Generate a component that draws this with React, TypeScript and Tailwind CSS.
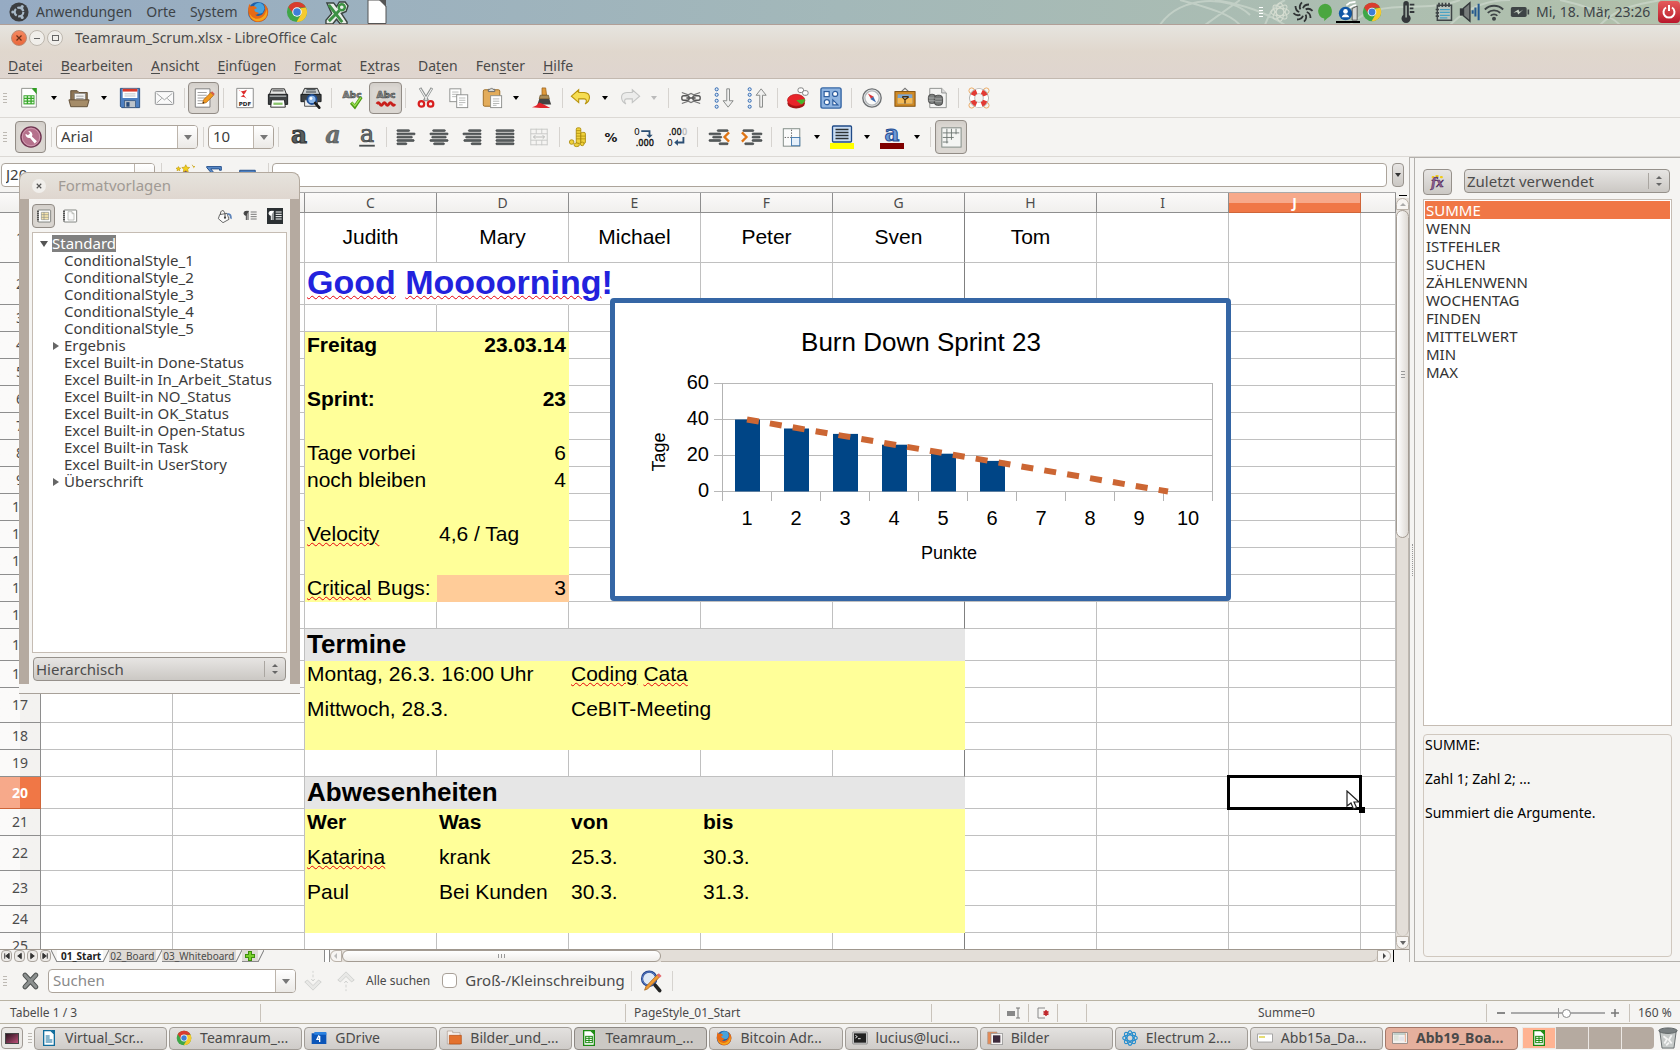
import React from "react";

type Cell = { t?: React.ReactNode; f?: "y" | "g" | "p" | "n"; c?: string };

const W = ({ children }: { children: React.ReactNode }) => (
  <span className="underline decoration-red-600 decoration-wavy decoration-1 underline-offset-1">{children}</span>
);

/* ---------- icons ---------- */
const Svg = ({ children, s = "size-6" }: { children: React.ReactNode; s?: string }) => (
  <svg viewBox="0 0 24 24" className={`${s} shrink-0 overflow-visible`} fill="none" aria-hidden="true">{children}</svg>
);

const bars = (x: number[], w: number[]) =>
  x.map((v, i) => <rect key={i} x={v} y={4 + i * 3.6} width={w[i]} height="2" rx="1" fill="#5b6061" stroke="#303436" strokeWidth=".6" />);

const icons: Record<string, React.ReactNode> = {
  newdoc: (<><path d="M4 1.500h11l5 5V22H4z" fill="#fff" stroke="#8a8c88" /><path d="M15 1h5.500v7z" fill="#2e9e22" /><rect x="6" y="9" width="12" height="10" fill="#39a82c" /><path d="M7 11h2.500M11 11h2.500M15 11h2M7 14h2.500M11 14h2.500M15 14h2M7 17h2.500M11 17h2.500M15 17h2" stroke="#e9f7e4" strokeWidth="1.700" /></>),
  open: (<><path d="M3 4h7l2 2h9v13H3z" fill="#8c7455" stroke="#5d4a33" /><path d="M7 7h12v10H7z" fill="#f4f4f2" stroke="#777" strokeWidth=".7" /><path d="M9 10h8M9 12.500h8" stroke="#999" /><path d="M1 14h22l-2 7.500H3z" fill="#a58c68" stroke="#5d4a33" /></>),
  save: (<><path d="M1.500 1.500h21v21H3l-1.500-1.500z" fill="#4d7fc1" stroke="#274b7c" /><rect x="4" y="2" width="16" height="10" fill="#fff" /><rect x="4" y="2" width="16" height="3" fill="#d8392b" /><path d="M6 7.500h12M6 9.800h12" stroke="#b4bcc4" /><rect x="6" y="15" width="12" height="7.500" fill="#bcc3ca" stroke="#2c4a70" strokeWidth=".7" /><rect x="8" y="16.500" width="3.500" height="5" fill="#274b7c" /></>),
  mail: (<><rect x="2.500" y="5" width="20" height="14" rx="1" fill="#fafafa" stroke="#85888a" /><path d="m4 7 8.500 7L21 7M4 17.500l5.500-5M21 17.500l-5.500-5" stroke="#9a9c9c" /></>),
  edit: (<><path d="M2.500 2h16v20h-16z" fill="#fff" stroke="#777" /><path d="M5 6h10M5 9h10M5 12h10M5 15h6M5 18h5" stroke="#999" /><path d="m10.500 18 1-4 8-8 3 3-8 8z" fill="#f29a1f" stroke="#a45d0b" strokeWidth=".8" /><path d="m19.500 6 1.300-1.300 3 3L22.500 9z" fill="#d4574a" /><path d="m10.500 18 .5-2 1.500 1.500z" fill="#222" /></>),
  pdf: (<><path d="M3 1.500h18v21H3z" fill="#fff" stroke="#858785" /><path d="M5 3c3 1 5 5 9 10-2-2-5-3-8-2 3-1 7-4 8-8-3 1-6 3-9 0z" fill="#dd2c2c" /><text x="12" y="21" textAnchor="middle" fontFamily="DejaVu Sans" fontWeight="700" fontSize="6" fill="#222">PDF</text></>),
  print: (<><path d="M5 2h14l3 8H2z" fill="#e6e7e5" stroke="#222" /><path d="M6 4h12" stroke="#777" strokeWidth="2" /><path d="M1.500 8h21v11h-21z" fill="#3d4143" stroke="#16181a" /><path d="M3 10h18" stroke="#a9adae" strokeWidth="1.500" /><path d="M5 14h14l1 8H4z" fill="#fff" stroke="#222" /><path d="M7 17h10v2.500H7z" fill="#88c36a" /></>),
  preview: (<><path d="M5 1.500h14l3 7H2z" fill="#cfd3d5" stroke="#222" /><path d="M7 3h10M6.500 5.500h11" stroke="#2c343a" strokeWidth="1.200" /><path d="M1 8h22v8H1z" fill="#3d4143" stroke="#16181a" /><path d="M5 14h14v7H5z" fill="#eee" stroke="#444" /><circle cx="13" cy="13.500" r="5" fill="#8db8ea" stroke="#1f4f96" strokeWidth="2" /><circle cx="12" cy="12.500" r="1.600" fill="#fff" /><path d="m16.500 17.500 4.500 5" stroke="#1e1e1e" strokeWidth="3" strokeLinecap="round" /></>),
  spell: (<><text x="11" y="12" textAnchor="middle" fontFamily="DejaVu Sans" fontWeight="700" fontSize="10" fill="#8a8d8c" stroke="#3c4040" strokeWidth=".6">Abc</text><path d="m10 17 4 4.500L21 11" stroke="#4b9a12" strokeWidth="3.600" /><path d="m10.600 17 3.400 3.600L20.500 11.500" stroke="#9be052" strokeWidth="1.500" /></>),
  autospell: (<><text x="12" y="12.500" textAnchor="middle" fontFamily="DejaVu Sans" fontWeight="700" fontSize="10" fill="#8a8d8c" stroke="#3c4040" strokeWidth=".6">Abc</text><path d="M2 18.500c1.200-2 2.100-2 3.300 0s2.100 2 3.300 0 2.100-2 3.300 0 2.100 2 3.300 0 2.100-2 3.300 0 2.100 2 3.300 0" stroke="#c8201c" strokeWidth="3" /></>),
  cut: (<><path d="M5.500 1 14 15M18.500 1 10 15" stroke="#8c908f" strokeWidth="3" /><path d="M5.800 2 13 14M18.200 2 11 14" stroke="#f2f2f2" strokeWidth="1.200" /><circle cx="7" cy="18.500" r="3" stroke="#d81e1e" strokeWidth="2.400" /><circle cx="17" cy="18.500" r="3" stroke="#d81e1e" strokeWidth="2.400" /></>),
  copy: (<><rect x="2" y="2" width="12" height="14" fill="#fff" stroke="#8b8d8b" /><path d="M4.500 5.500h7M4.500 8h7M4.500 10.500h7" stroke="#b5b7b5" /><rect x="9.500" y="8.500" width="12" height="14" fill="#fff" stroke="#8b8d8b" /><path d="M12 12h7M12 14.500h7M12 17h7M12 19.500h4" stroke="#b5b7b5" /></>),
  paste: (<><rect x="2.500" y="3" width="18" height="18" rx="1.500" fill="#e3ac5b" stroke="#98671f" /><path d="M8 5V2.500h2L11.500 1 13 2.500h2V5z" fill="#d6d8d6" stroke="#666" /><rect x="10.500" y="9.500" width="12" height="13" fill="#fff" stroke="#8b8d8b" /><path d="M13 13h7M13 15.500h7M13 18h7M13 20h4" stroke="#b0b2b0" /></>),
  brush: (<><path d="M12 1h4l1 8h-5z" fill="#e09a3c" stroke="#99601a" strokeWidth=".8" /><path d="M10 9h9l1 4H9z" fill="#ad8c56" stroke="#6b5227" strokeWidth=".8" /><path d="M9 13h11l2 6H7z" fill="#444" /><path d="M1 22c5-1 6-3 8-5l5 2 7 4H10z" fill="#e2242b" /></>),
  undo: (<path d="M9.500 3 1.500 10l8 7v-4h6c3 0 3 3 1 5.500 6-3 7-12-1-12.500h-6z" fill="#f6dd52" stroke="#b8930c" strokeWidth="1.200" />),
  redo: (<path d="m14.500 3 8 7-8 7v-4h-6c-3 0-3 3-1 5.500-6-3-7-12 1-12.500h6z" fill="#ececeb" stroke="#c3c4c3" strokeWidth="1.200" />),
  link: (<><rect x="2" y="9.500" width="8" height="5" rx="2" stroke="#555" strokeWidth="1.500" /><rect x="14" y="9.500" width="8" height="5" rx="2" stroke="#555" strokeWidth="1.500" /><path d="M7 12h10" stroke="#555" strokeWidth="1.800" /><path d="m2 6 7 2.500L12 7l3 1.500L22 6M2 18l7-2.500 3 1.500 3-1.500 7 2.500" stroke="#777" strokeWidth="1.400" /></>),
  sortd: (<>{[2.500, 8.500, 15, 21.500].map((y) => <circle key={y} cx="4" cy={y} r="1.700" fill="#dce9f8" stroke="#2a62ad" />)}<path d="M15 2h3v13h4l-5.500 7L11 15h4z" fill="#f0f0ef" stroke="#828482" /></>),
  sortu: (<>{[2.500, 8.500, 15, 21.500].map((y) => <circle key={y} cx="4" cy={y} r="1.700" fill="#dce9f8" stroke="#2a62ad" />)}<path d="M15 22h3V9h4l-5.500-7L11 9h4z" fill="#f0f0ef" stroke="#828482" /></>),
  chart: (<><ellipse cx="10" cy="18" rx="9.500" ry="5.500" fill="#a31515" /><ellipse cx="10" cy="14.500" rx="9.500" ry="6.500" fill="#e8242a" stroke="#b01414" strokeWidth=".7" /><path d="M10 14.500 19.500 13c.5 3-2 5-4 6z" fill="#46b52b" /><rect x="12" y="1" width="6" height="5" rx="2" fill="#fff" stroke="#777" /><rect x="17" y="4" width="6" height="5" rx="2" fill="#fff" stroke="#777" /></>),
  shapes: (<><rect x="1" y="1" width="22" height="22" rx="2" fill="#8fb4e0" stroke="#3565a4" strokeWidth="1.500" /><g stroke="#2d5d9e" strokeWidth="1.300" fill="#fff"><rect x="4.500" y="5" width="5.500" height="5.500" /><circle cx="16.500" cy="7.500" r="2.800" /><circle cx="7.500" cy="16.500" r="2.800" /><path d="M14 14v5.500h5.500z" /></g></>),
  compass: (<><circle cx="12" cy="12" r="10" fill="#e9ebee" stroke="#6e7173" strokeWidth="1.500" /><circle cx="12" cy="12" r="7.800" stroke="#b5b8ba" strokeWidth="1.400" fill="#fafafa" /><path d="m7.500 7 6.500 3.500L11 13z" fill="#d9363a" /><path d="m16.500 17-6.300-3.800L13.500 10.500z" fill="#3d69ad" /></>),
  gallery: (<><path d="m8 5 4-3.500L16 5" stroke="#777" strokeWidth="1.300" /><rect x="1" y="5" width="22" height="16" fill="#d08a25" stroke="#7b4a08" /><rect x="4" y="8" width="16" height="10" fill="#7da5cf" /><path d="M4 12h16v6H4z" fill="#f4ba55" /><path d="M12 18v-5M12 14l-3-3M12 14l4-3M9 10.500h7" stroke="#402a10" strokeWidth="1.300" /></>),
  source: (<><path d="M3 1.500h13l5 5v16H3z" fill="#f4f4f3" stroke="#8b8d8b" /><path d="M16 1.500v5h5" fill="#ddd" stroke="#8b8d8b" /><rect x="1.500" y="8" width="8" height="10" rx="3.500" fill="#7c7f7e" stroke="#444" /><rect x="8" y="9" width="9" height="11" rx="3.500" fill="#747776" stroke="#444" /><path d="M2 12h7M2 15h7M9 13h7M9 16h7" stroke="#b5b7b5" strokeWidth=".8" /></>),
  help: (<><circle cx="4" cy="4" r="3" stroke="#eba55a" /><circle cx="20" cy="4" r="3" stroke="#eba55a" /><circle cx="4" cy="20" r="3" stroke="#eba55a" /><circle cx="20" cy="20" r="3" stroke="#eba55a" /><circle cx="12" cy="12" r="7.500" stroke="#9a9c9b" strokeWidth="6.500" /><circle cx="12" cy="12" r="7.500" stroke="#fff" strokeWidth="5" /><circle cx="12" cy="12" r="7.500" stroke="#e23a34" strokeWidth="5" strokeDasharray="5.890 5.890" strokeDashoffset="-2.950" /></>),
  wrench: (<><circle cx="12" cy="12" r="11" fill="#b5718c" stroke="#6e3450" strokeWidth="1.500" /><circle cx="12" cy="12" r="9.500" stroke="#d39db2" /><path d="M6 8.500a4 4 0 0 0 5 4.500l5 6 2.500-2.300-5.500-5.200A4 4 0 0 0 9 5.500l2 2.500-2.300 2z" fill="#fff" /></>),
  bold: (<text x="12" y="19" textAnchor="middle" fontFamily="DejaVu Serif" fontWeight="700" fontSize="27" fill="#5a5f60" stroke="#34383a" strokeWidth="1.200">a</text>),
  italic: (<text x="12" y="19" textAnchor="middle" fontFamily="DejaVu Serif" fontStyle="italic" fontWeight="700" fontSize="26" fill="#6d7272" stroke="#3f4445" strokeWidth=".5">a</text>),
  underline: (<><text x="12" y="17" textAnchor="middle" fontFamily="DejaVu Serif" fontSize="26" fill="#6d7272" stroke="#3f4445" strokeWidth=".8">a</text><path d="M3.500 21.500h17" stroke="#4a4f50" strokeWidth="2" /></>),
  left: <>{bars([2, 2, 2, 2, 2], [14, 20, 17, 19, 11])}</>,
  center: <>{bars([5, 2, 4, 2, 6], [14, 20, 16, 20, 12])}</>,
  right: <>{bars([8, 2, 5, 3, 11], [14, 20, 17, 19, 11])}</>,
  justify: <>{bars([2, 2, 2, 2, 2], [20, 20, 20, 20, 20])}</>,
  merge: (<><path d="M3 3.500h18M3 8.500h18M3 15.500h18M3 20.500h18M3 3v18M21 3v18M9 3v5.500M15 3v5.500M9 15.500V21M15 15.500V21" stroke="#c6c7c5" /><path d="M6 12h12M8 10l-2 2 2 2M16 10l2 2-2 2" stroke="#b5b6b4" /></>),
  currency: (<><g fill="#efd13c" stroke="#a88708" strokeWidth=".9"><rect x="9" y="2" width="5" height="17" rx="1.500" /><rect x="14" y="7" width="5" height="12" rx="1.500" /><circle cx="4" cy="17.500" r="2.500" /><ellipse cx="9.500" cy="20.500" rx="3" ry="2" /><circle cx="15.500" cy="19.500" r="2" /></g><path d="M9 5h5M9 8h5M9 11h10M9 14h10" stroke="#a88708" strokeWidth=".8" /></>),
  percent: (<text x="12" y="17" textAnchor="middle" fontFamily="DejaVu Sans" fontWeight="700" fontSize="14" fill="#151515">%</text>),
  adddec: (<><text x="1" y="10" fontFamily="DejaVu Sans" fontSize="10" fill="#111">0</text><text x="3" y="22" fontFamily="DejaVu Sans" fontSize="9" fill="#111" stroke="#111" strokeWidth=".4">.000</text><path d="M9 5.500h9v5" stroke="#2c4f74" strokeWidth="2" /><path d="M14.500 9.500h7L18 13z" fill="#2c4f74" /></>),
  deldec: (<><text x="3" y="9.500" fontFamily="DejaVu Sans" fontSize="9" fill="#111" stroke="#111" strokeWidth=".3">.00<tspan fill="#bbb" stroke="#bbb">0</tspan></text><text x="1" y="22" fontFamily="DejaVu Sans" fontSize="10" fill="#111">0</text><path d="M19 12v6h-7" stroke="#2c4f74" strokeWidth="2" /><path d="M13 14.500v7L9 18z" fill="#2c4f74" /></>),
  inddec: (<>{bars([10, 1, 5, 1, 12], [12, 13, 10, 13, 10])}<path d="m23 7-5 5 5 5" stroke="#df7414" strokeWidth="2.500" /></>),
  indinc: (<>{bars([2, 12, 12, 12, 4], [12, 11, 9, 11, 10])}<path d="m1 7 5 5-5 5" stroke="#df7414" strokeWidth="2.500" /></>),
  border: (<><rect x="2.500" y="3" width="18" height="19" fill="#fbfbfb" stroke="#7b8580" /><path d="M11.500 4v8M4 12.500h8" stroke="#555" strokeDasharray="1.500 1.500" /><rect x="11.500" y="12.500" width="9" height="9" fill="#e6f0fb" stroke="#4277ad" /></>),
  bg: (<><rect x="2.500" y="1" width="19" height="16" rx="1" fill="#c9dcf3" stroke="#204a87" strokeWidth="1.300" /><path d="M5.500 4.500h13M5.500 7.500h13M5.500 10.500h13M5.500 13.500h13" stroke="#2d3235" strokeWidth="1.700" /><path d="M0 18h24v6H0z" fill="#ffff00" /></>),
  color: (<><text x="12" y="16" textAnchor="middle" fontFamily="DejaVu Serif" fontWeight="700" fontSize="23" fill="#6d9ad6" stroke="#1f4c92">a</text><path d="M0 18h24v6H0z" fill="#800000" /></>),
  grid: (<><rect x="2" y="2" width="21" height="21" fill="#f4f5f3" stroke="#7b8580" /><path d="M3 7.500h18M3 12.500h12M3 17.500h6M7.500 3v16M12.500 3v12M17.500 3v6" stroke="#6d7672" /></>),
  wizard: (<><path d="M4 22 16 10" stroke="#6b3b7c" strokeWidth="4" /><path d="m15 3 1.300 2.700 3 .3-2.200 2 .6 3-2.700-1.500L12.300 11l.6-3-2.200-2 3-.3zM22 3l.9 1.800 2 .2-1.500 1.300M7 5l.8 1.600 1.700.2-1.300 1.100L8.500 9.500 7 8.700l-1.500.8.300-1.600L4.500 6.800l1.700-.2z" fill="#f3cf1d" stroke="#c09a08" strokeWidth=".7" /></>),
  sum: (<path d="M4 5h16v4h-2V7.500H8.500L13 13l-5 6H20v2H4l6-8-6-7z" fill="#5b8cc9" stroke="#204a87" />),
  eq: (<path d="M4 9h17v4H4zM4 16h17v3.500H4z" fill="#4b7fc0" stroke="#204a87" />),
  fx: (<><path d="M5 5.500h1M10 4h1.500M16 5.500h1" stroke="#efcb18" strokeWidth="3" strokeLinecap="round" /><text x="11" y="19" textAnchor="middle" fontFamily="DejaVu Serif" fontStyle="italic" fontWeight="700" fontSize="16" fill="#91608f" stroke="#4d2a5c" strokeWidth=".7">fx</text></>),
  styCell: (<><rect x="3" y="3" width="19" height="18" rx="1" fill="#fff" stroke="#7a7d79" strokeWidth="1.400" /><path d="M3 4v16" stroke="#333" strokeWidth="3" strokeDasharray="1.500 1.500" /><path d="M8 6.500h11v11H8z" fill="#f7e5ab" stroke="#8d8f8b" /><path d="M8 10h11M8 14h11M12 6v12" stroke="#8d8f8b" /></>),
  styPage: (<><rect x="3" y="3" width="19" height="18" rx="1" fill="#fff" stroke="#7a7d79" strokeWidth="1.400" /><path d="M3 4v16" stroke="#333" strokeWidth="3" strokeDasharray="1.500 1.500" /><path d="M9 5.500h6l3 3v9.500H9zM15 5.500v3h3" stroke="#a7aaa5" fill="#fafafa" /></>),
  bucket: (<><path d="m4 10 11-2 3 9-9 5-7-6z" fill="#fafafa" stroke="#555" strokeWidth="1.300" /><path d="M5 10c0-8 6-8 7-1v6" stroke="#555" strokeWidth="1.500" /><circle cx="12" cy="14.500" r="1.700" fill="#444" /><path d="M15 8c5-1 8 2 7 9l-3-2c1-4-1-5-3-5z" fill="#5d83b9" /></>),
  para: (<><path d="M9 5v13M6.500 5v13M10 5H6a3 3 0 0 0 0 6h.5" stroke="#444" strokeWidth="1.500" fill="#444" /><path d="M13 6h9M13 9.500h9M13 13h9M13 16.500h9" stroke="#666" strokeWidth="1.300" /></>),
  paraInv: (<><path d="M0 0h24v24H0z" fill="#2b3033" /><path d="M9 5v13M6.500 5v13M10 5H6a3 3 0 0 0 0 6h.5" stroke="#fff" strokeWidth="1.500" fill="#fff" /><path d="M13 6h9M13 9.500h9M13 13h9M13 16.500h9" stroke="#fff" strokeWidth="1.500" /></>),
  closeX: (<><path d="m6 5 13 14M19 5 6 19" stroke="#4e5251" strokeWidth="6" strokeLinecap="round" /><path d="m6 5 13 14M19 5 6 19" stroke="#8c908f" strokeWidth="3.500" strokeLinecap="round" /></>),
  down: (<path d="M12 1v2M12 5v3M12 22l-9-9 3-2 6 6 6-6 3 2zM10 10l2 2 2-2" fill="#e8e8e6" stroke="#cfd0ce" />),
  up: (<path d="M12 23v-2M12 19v-3M12 2l-9 9 3 2 6-6 6 6 3-2zM10 14l2-2 2 2" fill="#e8e8e6" stroke="#cfd0ce" />),
  findrep: (<><circle cx="10" cy="9.500" r="7.800" fill="#dfe9f5" stroke="#23438c" strokeWidth="2.400" /><circle cx="10" cy="9.500" r="7.500" stroke="#6d92d6" strokeWidth=".8" /><path d="m16.500 16.500 5 6" stroke="#222" strokeWidth="4" strokeLinecap="round" /><path d="m5 22 1.500-4L19 5l2.500 2.500L8.500 20.500z" fill="#f09a34" stroke="#9c5c10" strokeWidth=".8" /><path d="m18.500 5.500 2-2 3 3-2 2z" fill="#e5696e" /></>),
  ubuntu: (<><circle cx="12" cy="12" r="11.500" fill="#3c3e40" /><circle cx="12" cy="12" r="5.200" stroke="#a9bac8" strokeWidth="2.600" strokeDasharray="9 1.900" /><circle cx="4.600" cy="12" r="1.900" fill="#a9bac8" /><circle cx="15.800" cy="5.500" r="1.900" fill="#a9bac8" /><circle cx="15.800" cy="18.500" r="1.900" fill="#a9bac8" /></>),
  firefox: (<><circle cx="12" cy="12" r="11" fill="#1f5fa8" /><circle cx="13" cy="8" r="6" fill="#49a3dc" /><path d="M1.500 7C0 16 5 23 12 23s12-6 11-13c-1-4-3-6-5-7 2 4 2 6 1 8-2 5-7 7-10 4 2 0 3-1 4-2-3-1-5-1-5-4l3-1C9 5 6 5 4 6L2.500 3z" fill="#e66a16" /><path d="M3 14c2 5 8 7 13 4 3-2 5-5 5-9 3 7-2 13-9 13-5 0-9-4-9-8z" fill="#f5a71c" /></>),
  chrome: (<><circle cx="12" cy="12" r="11" fill="#3fa648" /><path d="M2.500 6.500A11 11 0 0 1 21.800 7H12L8 14z" fill="#d93c2f" /><path d="M21.800 7A11 11 0 0 1 11.500 23L16.500 14.500 16 8z" fill="#f6ca2d" /><circle cx="12" cy="12" r="5.200" fill="#fff" /><circle cx="12" cy="12" r="4.100" fill="#3f7fd6" /></>),
  keyx: (<><path d="M2 2h7l3 4 3-5h6l3 4-2 6-5 2 6 9v2h-7l-4-5-4 5H1v-4l6-7z" fill="#e9efe9" stroke="#3a4540" strokeWidth="1.500" /><path d="m4 4 14 18M4 21 15 10" stroke="#3d9144" strokeWidth="3" /><circle cx="17.500" cy="6.500" r="3.200" stroke="#3d9144" strokeWidth="2.600" /></>),
  blank: (<><path d="M3 0h12l6 6v17.500H3z" fill="#fff" stroke="#555" /><path d="M14 0h7v7z" fill="#555" /></>),
  atom: (<g stroke="#d5dcd0" strokeWidth="1.300"><ellipse cx="12" cy="12" rx="11" ry="4.500" /><ellipse cx="12" cy="12" rx="11" ry="4.500" transform="rotate(45 12 12)" /><ellipse cx="12" cy="12" rx="11" ry="4.500" transform="rotate(90 12 12)" /><ellipse cx="12" cy="12" rx="11" ry="4.500" transform="rotate(135 12 12)" /></g>),
  atomB: (<g stroke="#2a8fce" strokeWidth="1.700"><ellipse cx="12" cy="12" rx="11" ry="4.500" /><ellipse cx="12" cy="12" rx="11" ry="4.500" transform="rotate(45 12 12)" /><ellipse cx="12" cy="12" rx="11" ry="4.500" transform="rotate(90 12 12)" /><ellipse cx="12" cy="12" rx="11" ry="4.500" transform="rotate(135 12 12)" /></g>),
  swirl: (<g stroke="#2f3334" strokeWidth="2.400">{[0, 45, 90, 135, 180, 225, 270, 315].map((a) => <path key={a} d="M12 7c1-3 4-5 8-5" transform={`rotate(${a} 12 12)`} />)}</g>),
  bubble: (<path d="M12 1a10 10 0 0 1 3.500 19L11 24v-3.200A10 10 0 0 1 12 1z" fill="#4aa63f" />),
  netuser: (<><circle cx="9" cy="15" r="8" fill="#0f56a5" /><circle cx="9" cy="12.500" r="2.800" fill="#fff" /><path d="M4.500 19.500c1-5 8-5 9 0z" fill="#fff" /><path d="M17 23V9l6-3v17z" fill="#d5d7d5" stroke="#444" /><path d="M10 5c3-1 3-3 5-3s2-1 6-1M14 8c3-1 3-3 8-3" stroke="#fff" strokeWidth="2" /></>),
  thermo: (<><path d="M8 3a3 3 0 0 1 6 0v12a5 5 0 1 1-6 0z" fill="#33373a" /><path d="M11 5v13" stroke="#b3c2b6" strokeWidth="1.500" /><path d="M15 4h5M15 8h4M15 12h5" stroke="#33373a" strokeWidth="2" /></>),
  note: (<><path d="M4 4h17v18H4z" fill="#b9c4bd" stroke="#3e4446" strokeWidth="1.800" /><path d="M6 1v5M10 1v5M14 1v5M18 1v5M2 9h4M2 13h4M2 17h4" stroke="#3e4446" strokeWidth="2" /><path d="M7 9h12M7 12.500h12M7 16h12M7 19h9" stroke="#4aa2c4" strokeWidth="1.500" /></>),
  vol: (<><path d="M2 8h4v8H2z" fill="#33373a" /><path d="m6 8 7-6v20l-7-6z" fill="#777c7b" stroke="#33373a" strokeWidth="1.500" /><path d="M16 10v4M19 7v10M22.500 3v18" stroke="#24598f" strokeWidth="2.200" /></>),
  wifi: (<g stroke="#3e4446" strokeWidth="2.200"><path d="M1 9c6-6 16-6 22 0M4.500 13c4-4 11-4 15 0M8 16.500c2-2.300 6-2.300 8 0" /><circle cx="12" cy="20" r="1.300" fill="#3e4446" /></g>),
  batt: (<><rect x="1" y="6" width="19" height="12" rx="2" fill="#3e4446" /><path d="M21 9h2v6h-2z" fill="#3e4446" /><path d="m4 13 6-4 1.500 3L16 9l-6 6-1.500-3z" fill="#c5d0c3" /></>),
  writer: (<><path d="M4 1h11l5 5v17H4z" fill="#fff" stroke="#106c9c" strokeWidth="2" /><path d="M15 0h6v7z" fill="#106c9c" /><path d="M7 9h6M7 12h6M7 15h10M7 18h10" stroke="#106c9c" strokeWidth="1.600" /></>),
  calc: (<><path d="M4 1h11l5 5v17H4z" fill="#fff" stroke="#1c8a12" strokeWidth="2" /><path d="M15 0h6v7z" fill="#1c8a12" /><rect x="7" y="9.500" width="10" height="9.500" fill="#fff" stroke="#1c8a12" strokeWidth="1.500" /><path d="M7 12.500h10M7 15.700h10M12 9.500V19" stroke="#1c8a12" strokeWidth="1.500" /></>),
  gdrive: (<><path d="M1 5h22v16H1z" fill="#0b55b8" /><path d="M5 3h18v4H5z" fill="#2c82e0" /><path d="M12 8 9 14h5M13 9v9" stroke="#fff" strokeWidth="2" /></>),
  folder: (<><path d="M2 4V1.500h8V4h11v17H2z" fill="#f6f0ec" stroke="#a99a90" /><path d="M5 8h18v13H5z" fill="#e4722e" stroke="#b04d14" /></>),
  term: (<><rect x="1" y="3" width="22" height="18" rx="1" fill="#ccc" stroke="#777" /><rect x="3" y="5" width="18" height="14" fill="#222" /><path d="m5 8 3 2-3 2M9 13h4" stroke="#fff" strokeWidth="1.300" /></>),
  pics: (<><path d="M1 3h14v18H1z" fill="#e68a55" stroke="#a99a90" /><rect x="6" y="5" width="17" height="17" fill="#f5f3f2" stroke="#888" /><rect x="9" y="8" width="11" height="11" fill="#3c2a3c" /></>),
  thumb1: (<><rect x="1" y="6" width="22" height="12" fill="#fff" stroke="#888" /><path d="M3 9h9v3H3z" fill="#e6dd75" /></>),
  thumb2: (<><rect x="1" y="4" width="22" height="16" fill="#f3f1ee" stroke="#777" /><path d="M3 8h7v8H3z" fill="#dfe4dc" /><path d="M2 6h18" stroke="#5e8e86" /><path d="M11 10h7v6h-7z" fill="#e4e4ea" /><path d="M20 5v13" stroke="#e58a5f" /></>),
  trash: (<><path d="M3 4h18l-2.500 19h-13z" fill="#c6cac9" stroke="#63686a" /><ellipse cx="12" cy="4" rx="10" ry="3" fill="#7a8082" stroke="#5a5f60" /><path d="m7 10 4 3-3 5M16 9l-3 5 3 4M10 20l3-3" stroke="#f4f4f4" strokeWidth="2" /></>),
};

const Sep = ({ w = "w-2" }: { w?: string }) => (
  <span className={`${w} flex shrink-0 justify-center`}><span className="h-5 w-px bg-[#d6d3cf]" /></span>
);
const Grip = ({ c = "bg-[#bdb9b3]" }: { c?: string }) => (
  <span className="flex w-3 shrink-0 flex-col items-center gap-0.5 pr-0.5">
    {[0, 1, 2, 3].map((i) => <span key={i} className={`h-px w-1 ${c}`} />)}
  </span>
);
const Tri = ({ c = "border-t-black" }: { c?: string }) => (
  <span className={`h-0 w-0 border-x-[3px] border-t-[4px] border-x-transparent ${c}`} />
);
const TB = ({ i, l, on, w = "w-[33px]", s = "size-[22px]" }: { i: string; l: string; on?: boolean; w?: string; s?: string }) => (
  <button aria-label={l} title={l} className={`${w} flex h-8 shrink-0 items-center justify-center rounded ${on ? "border border-[#928c86] bg-[#dbd7d2] shadow-inner" : ""}`}>
    <Svg s={s}>{icons[i]}</Svg>
  </button>
);
const DD = ({ l, dim }: { l: string; dim?: boolean }) => (
  <button aria-label={l} className="flex h-8 w-4 shrink-0 items-center justify-center"><Tri c={dim ? "border-t-[#bbb]" : "border-t-black"} /></button>
);
const Combo = ({ v, l, w, ph }: { v?: string; l: string; w: string; ph?: string }) => (
  <span className={`${w} flex h-6 shrink-0 overflow-hidden rounded border border-[#aca49b] bg-white`}>
    <input aria-label={l} defaultValue={v} placeholder={ph} className="min-w-0 flex-1 px-1 text-[15px] text-[#3c3c3c] outline-none placeholder:text-[#8a8a8a]" />
    <button aria-label={`${l} auswählen`} className="flex w-5 items-center justify-center border-l border-[#bdb5ac] bg-gradient-to-b from-white to-[#ebe9e6]">
      <span className="h-0 w-0 border-x-4 border-t-[5px] border-x-transparent border-t-[#777]" />
    </button>
  </span>
);
const Select = ({ v, l, cls }: { v: string; l: string; cls: string }) => (
  <span className={`relative block ${cls}`}>
    <select aria-label={l} className="h-6 w-full appearance-none rounded border border-[#96918b] bg-gradient-to-b from-[#e7e5e3] to-[#cbc8c4] px-0.5 text-[15px] leading-5 text-[#4c4c4c]"><option>{v}</option></select>
    <span className="pointer-events-none absolute right-2 top-1 flex h-4 w-3.5 flex-col items-end justify-center gap-1 border-l border-[#aaa6a1]">
      <span className="h-0 w-0 border-x-[3px] border-b-[3px] border-x-transparent border-b-[#666]" />
      <span className="h-0 w-0 border-x-[3px] border-t-[3px] border-x-transparent border-t-[#666]" />
    </span>
  </span>
);

/* ---------- sheet ---------- */
const cols = ["A", "B", "C", "D", "E", "F", "G", "H", "I", "J", ""];
const y: Cell = { f: "y" };
const H: Record<number, string> = { 27: "h-[27px]", 32: "h-[32px]", 35: "h-[35px]", 42: "h-[42px]", 50: "h-[50px]" };
const b = "font-bold";
const nm = (t: string): Cell => ({ t, c: "text-center" });
const T = "text-[26px] leading-[26px] pb-[3px] font-bold";

/* each row lists its height and the cells from column C onwards */
const rows: [number, Cell[]][] = [
  [50, [nm("Judith"), nm("Mary"), nm("Michael"), nm("Peter"), nm("Sven"), nm("Tom")]],
  [42, [{ t: <span className="text-[#2222dd]"><W>Good</W> <W>Moooorning</W>!</span>, f: "n", c: "text-[34px] leading-[34px] pb-[5px] font-bold" }, { f: "n" }]],
  [27, []],
  [27, [{ t: "Freitag", f: "y", c: b }, { t: "23.03.14", f: "y", c: "font-bold text-right" }]],
  [27, [y, y]],
  [27, [{ t: "Sprint:", f: "y", c: b }, { t: "23", f: "y", c: "font-bold text-right" }]],
  [27, [y, y]],
  [27, [{ t: "Tage vorbei", f: "y" }, { t: "6", f: "y", c: "text-right" }]],
  [27, [{ t: "noch bleiben", f: "y" }, { t: "4", f: "y", c: "text-right" }]],
  [27, [y, y]],
  [27, [{ t: <W>Velocity</W>, f: "y" }, { t: "4,6 / Tag", f: "y" }]],
  [27, [y, y]],
  [27, [{ t: <><W>Critical</W> Bugs:</>, f: "y" }, { t: "3", f: "p", c: "text-right" }]],
  [27, []],
  [32, [{ t: "Termine", f: "g", c: T }, { f: "g" }, { f: "g" }, { f: "g" }, { f: "g" }]],
  [27, [{ t: "Montag, 26.3. 16:00 Uhr", f: "y" }, y, { t: <><W>Coding</W> <W>Cata</W></>, f: "y" }, y, y]],
  [35, [{ t: "Mittwoch, 28.3.", f: "y" }, y, { t: "CeBIT-Meeting", f: "y" }, y, y]],
  [27, [y, y, y, y, y]],
  [27, []],
  [32, [{ t: "Abwesenheiten", f: "g", c: T }, { f: "g" }, { f: "g" }, { f: "g" }, { f: "g" }]],
  [27, [{ t: "Wer", f: "y", c: b }, { t: "Was", f: "y", c: b }, { t: "von", f: "y", c: b }, { t: "bis", f: "y", c: b }, y]],
  [35, [{ t: <W>Katarina</W>, f: "y" }, { t: "krank", f: "y" }, { t: "25.3.", f: "y" }, { t: "30.3.", f: "y" }, y]],
  [35, [{ t: "Paul", f: "y" }, { t: "Bei Kunden", f: "y" }, { t: "30.3.", f: "y" }, { t: "31.3.", f: "y" }, y]],
  [27, [y, y, y, y, y]],
  [27, []],
];
const fills = {
  y: "bg-[#ffff99] border-[#ffff99]",
  g: "bg-[#e6e6e6] border-[#e6e6e6]",
  p: "bg-[#ffcc99] border-[#ffcc99]",
  n: "border-b-[#c0c0c0] border-r-white",
};

const Sheet = () => (
  <table className="w-full table-fixed border-separate border-spacing-0 bg-white">
    <colgroup><col className="w-[41px]" />{cols.map((_, i) => <col key={i} className={i < 10 ? "w-[132px]" : ""} />)}</colgroup>
    <thead>
      <tr className="h-5 bg-gradient-to-b from-[#fbfaf9] to-[#f0efed] text-sm leading-4 text-[#4c4c4c]">
        <th className="border-r border-b border-[#8e8e8e] p-0" />
        {cols.map((c, i) => (
          <th key={i} scope="col" className={c === "J" ? "border-r border-b border-[#cf6539] bg-gradient-to-b from-[#f7a98a] from-50% to-[#f07746] to-50% p-0 font-bold text-white" : "border-r border-b border-[#8e8e8e] p-0 font-normal"}>{c}</th>
        ))}
      </tr>
    </thead>
    <tbody>
      {rows.map(([h, cells], r) => (
        <tr key={r} className={H[h]}>
          <th scope="row" className={r === 19 ? "border-r border-b border-[#cf6539] bg-gradient-to-r from-[#f7a98a] from-50% to-[#f07746] to-50% p-0 text-sm leading-4 font-bold text-white" : "border-r border-b border-[#8e8e8e] bg-gradient-to-r from-[#fbfaf9] from-50% to-[#f3f2f0] to-50% p-0 text-sm leading-4 font-normal text-[#4c4c4c]"}>{r + 1}</th>
          {cols.map((_, c) => {
            const cell = cells[c - 2] ?? {};
            const line = cell.f ? fills[cell.f] : c === 6 ? "border-b-[#c0c0c0] border-r-[#808080]" : "border-[#c0c0c0]";
            return (
              <td key={c} className={`border-r border-b px-0.5 pt-0 whitespace-nowrap text-black ${r === 0 ? "align-middle" : "align-bottom"} ${line} ${cell.c?.includes("leading") ? "" : "text-[21px] leading-[22px] pb-0.5"} ${cell.c ?? ""} font-['Liberation_Sans',Arial,sans-serif]`}>
                {cell.t && <span className="relative z-[1]">{cell.t}</span>}
                {r === 19 && c === 9 && (
                  <span className="relative block h-[29px]">
                    <span className="absolute -inset-x-1 -top-0.5 -bottom-1 border-[3px] border-black" />
                    <span className="absolute -right-[7px] -bottom-[7px] size-1.5 bg-black" />
                    <svg viewBox="0 0 14 20" className="absolute -right-0.5 -bottom-1 h-5 w-3.5"><path d="M1 1v15l4-3 2.500 6 3-1.500L8 12h5z" fill="#fff" stroke="#222" strokeWidth="1.200" /></svg>
                  </span>
                )}
              </td>
            );
          })}
        </tr>
      ))}
    </tbody>
  </table>
);

const done = [40, 35, 32, 26, 21, 17];
const Chart = () => (
  <figure className="absolute top-[105px] left-[610px] z-[2] rounded-sm border-[5px] border-[#3566a5] bg-white">
    <svg viewBox="0 1 611 293" className="block h-[293px] w-[611px]" fontFamily="Liberation Sans, Arial, sans-serif" role="img" aria-label="Burn Down Sprint 23">
      <text x="306" y="49" textAnchor="middle" fontSize="26">Burn Down Sprint 23</text>
      {[60, 40, 20, 0].map((v, i) => (
        <g key={v}>
          <path d={`M99 ${81.5 + i * 36}H598`} stroke="#b8b8b8" />
          <text x="94" y={87 + i * 36} textAnchor="end" fontSize="20">{v}</text>
        </g>
      ))}
      <path d="M107.500 81v110M597.500 81v110" stroke="#b3b3b3" />
      {done.map((v, i) => <rect key={i} x={120 + i * 49} y={189.5 - v * 1.8} width="25" height={v * 1.8} fill="#004586" />)}
      {Array.from({ length: 10 }, (_, i) => (
        <g key={i}>
          <path d={`M${107.5 + i * 49} 190v9`} stroke="#b3b3b3" />
          <text x={132 + i * 49} y="223" textAnchor="middle" fontSize="20">{i + 1}</text>
        </g>
      ))}
      <path d="M597.500 190v9" stroke="#b3b3b3" />
      <path d="M132 117.500 553 189.500" stroke="#cc6633" strokeWidth="6" strokeDasharray="12 11.200" />
      <text x="334" y="257" textAnchor="middle" fontSize="18">Punkte</text>
      <text transform="translate(50 150) rotate(-90)" textAnchor="middle" fontSize="18">Tage</text>
    </svg>
  </figure>
);

const styles: [string, number, string?][] = [
  ["Standard", 0, "open"], ["ConditionalStyle_1", 1], ["ConditionalStyle_2", 1], ["ConditionalStyle_3", 1], ["ConditionalStyle_4", 1], ["ConditionalStyle_5", 1],
  ["Ergebnis", 1, "closed"], ["Excel Built-in Done-Status", 1], ["Excel Built-in In_Arbeit_Status", 1], ["Excel Built-in NO_Status", 1], ["Excel Built-in OK_Status", 1],
  ["Excel Built-in Open-Status", 1], ["Excel Built-in Task", 1], ["Excel Built-in UserStory", 1], ["Überschrift", 1, "closed"],
];

const StylesDialog = () => (
  <section aria-label="Formatvorlagen" className="absolute top-[172px] left-[19px] z-10 flex h-[522px] w-[281px] flex-col rounded-t-lg border-b border-[#a8a199] bg-[#f5f4f2]">
    <header className="flex h-[27px] shrink-0 items-center gap-3 rounded-t-lg border border-b-0 border-[#b3a99e] bg-gradient-to-b from-[#e6e3dd] to-[#dfd6cf] pl-3 text-[15px] text-[#a09a94]">
      <button aria-label="Schließen" className="flex size-3.5 items-center justify-center rounded-full bg-[#f1efec]">
        <svg viewBox="0 0 8 8" className="size-1.5"><path d="m1 1 6 6M7 1 1 7" stroke="#555" strokeWidth="1.500" /></svg>
      </button>
      <h2>Formatvorlagen</h2>
    </header>
    <div className="flex min-h-0 flex-1 flex-col border-x-[10px] border-[#b5aaa0] px-[3px]">
      <div className="flex h-[33px] shrink-0 items-center gap-[5px]">
        <TB i="styCell" l="Zellvorlagen" on w="w-[23px] !h-6" s="size-4" />
        <TB i="styPage" l="Seitenvorlagen" w="w-5" s="size-4" />
        <span className="flex-1" />
        <TB i="bucket" l="Gießkannenmodus" w="w-5" s="size-4" />
        <TB i="para" l="Neue Vorlage" w="w-5" s="size-4" />
        <TB i="paraInv" l="Vorlage aktualisieren" w="w-5 mr-0.5" s="size-4" />
      </div>
      <ul className="flex-1 border border-[#c5bcb3] bg-white pt-0.5 text-[15px] leading-[17px] text-[#3c3c3c]">
        {styles.map(([t, d, s]) => (
          <li key={t} className={`flex items-center ${d ? "pl-[18px]" : "pl-1.5"}`}>
            <span className="flex w-[13px] shrink-0 justify-center pr-1">
              {s === "open" && <span className="h-0 w-0 border-x-4 border-t-[6px] border-x-transparent border-t-[#555]" />}
              {s === "closed" && <span className="h-0 w-0 border-y-4 border-l-[6px] border-y-transparent border-l-[#666]" />}
            </span>
            <span className={d ? "" : "bg-[#808080] text-white"}>{t}</span>
          </li>
        ))}
      </ul>
      <Select v="Hierarchisch" l="Ansicht der Vorlagen" cls="mt-1 mb-[3px] mx-px" />
    </div>
    <div className="h-[9px] shrink-0" />
  </section>
);

const menus: [string, string, string][] = [["", "D", "atei"], ["", "B", "earbeiten"], ["", "A", "nsicht"], ["", "E", "infügen"], ["", "F", "ormat"], ["E", "x", "tras"], ["Da", "t", "en"], ["Fen", "s", "ter"], ["", "H", "ilfe"]];
const tasks: [string, string, string?][] = [["writer", "Virtual_Scr..."], ["chrome", "Teamraum_..."], ["gdrive", "GDrive"], ["folder", "Bilder_und_..."], ["calc", "Teamraum_...", "on"], ["firefox", "Bitcoin Adr..."], ["term", "lucius@luci..."], ["pics", "Bilder"], ["atomB", "Electrum 2...."], ["thumb1", "Abb15a_Da..."], ["thumb2", "Abb19_Boa...", "hot"]];
const fns = ["SUMME", "WENN", "ISTFEHLER", "SUCHEN", "ZÄHLENWENN", "WOCHENTAG", "FINDEN", "MITTELWERT", "MIN", "MAX"];
const navs = ["M3 2v6M8 2 4 5l4 3z", "M7 2 3 5l4 3z", "m3 2 4 3-4 3z", "M7 2v6M2 2l4 3-4 3z"];
const Slant = ({ d = "M0 12 6 0" }: { d?: string }) => (
  <svg viewBox="0 0 6 12" className="h-3 w-1.5 shrink-0" fill="none" stroke="#777" aria-hidden="true"><path d={d} /></svg>
);

export default function App() {
  return (
    <div className="relative flex h-screen flex-col overflow-hidden bg-[#f5f4f2] font-['Noto_Sans',sans-serif] text-sm text-[#4a4a4a]">
      {/* desktop panel */}
      <header className="relative flex h-[25px] shrink-0 items-center overflow-hidden border-b border-[#b09f97] bg-gradient-to-r from-[#96abc3] via-[#a3b8b9] to-[#b2c1ab] text-[#3d4347]">
        <svg viewBox="0 0 560 25" className="absolute right-0 h-[25px] w-[560px]" fill="none" stroke="#d2dcd2" strokeOpacity=".6" strokeWidth="2" aria-hidden="true">
          <path d="M40 25c20-30 70-30 90-10M60 0c30 8 50 14 60 25M85 25 120 0M95 0c30 5 50 12 70 25M145 25c5-14 10-20 20-25M230 25c30-30 70-10 110-25M330 25c20-20 40-25 60-25M440 0c20 4 50 14 60 25M480 25c20-20 40-20 60-25" />
        </svg>
        <button aria-label="Startmenü" className="ml-2 flex w-[22px] justify-center"><Svg s="size-5">{icons.ubuntu}</Svg></button>
        <nav className="flex gap-3.5 pl-1.5"><a href="#anwendungen">Anwendungen</a><a href="#orte">Orte</a><a href="#system">System</a></nav>
        <span className="flex items-center gap-[17px] pl-2.5"><Svg s="size-[22px]">{icons.firefox}</Svg><Svg s="size-[22px]">{icons.chrome}</Svg><Svg s="size-[23px]">{icons.keyx}</Svg><Svg s="size-6">{icons.blank}</Svg></span>
        <span className="relative ml-auto flex items-center gap-1">
          <span className="flex items-center gap-0.5">
            <Grip c="bg-white" />
            <Svg s="size-5">{icons.atom}</Svg>
            <span className="px-0.5"><Svg s="size-[18px]">{icons.swirl}</Svg></span>
            <Svg s="size-[18px]">{icons.bubble}</Svg>
            <span className="border-b-2 border-black px-0.5"><Svg s="size-5">{icons.netuser}</Svg></span>
            <Svg s="size-5">{icons.chrome}</Svg>
          </span>
          <span className="pl-2.5 pr-3"><Svg s="size-[22px]">{icons.thermo}</Svg></span>
          <Svg s="size-5">{icons.note}</Svg>
          <Svg s="size-[22px]">{icons.vol}</Svg>
          <Svg s="size-5">{icons.wifi}</Svg>
          <span className="px-0.5"><Svg s="size-5">{icons.batt}</Svg></span>
          <time className="w-[118px] whitespace-nowrap">Mi, 18. Mär, 23:26</time>
          <button aria-label="Ausschalten" className="flex size-[22px] items-center justify-center rounded bg-gradient-to-b from-[#e55b5b] to-[#b9142c]">
            <svg viewBox="0 0 16 16" className="size-4" fill="none" stroke="#fff" strokeWidth="2"><path d="M5 3.500a5.500 5.500 0 1 0 6 0M8 1v6" /></svg>
          </button>
        </span>
      </header>

      {/* title and menu */}
      <div className="h-[54px] shrink-0 border-b border-[#c3b9b0] bg-gradient-to-b from-[#e6e4df] via-[#e0d7cd] to-[#dfd5cf]">
        <div className="flex h-[26px] items-center pl-[11px]">
          <span className="flex gap-0.5">
            <button aria-label="Schließen" className="flex size-4 items-center justify-center rounded-full border border-[#b98a74] bg-gradient-to-b from-[#f4875f] to-[#e9683c]"><svg viewBox="0 0 8 8" className="size-2"><path d="m1.500 1.500 5 5M6.500 1.500l-5 5" stroke="#69301a" strokeWidth="1.200" /></svg></button>
            <button aria-label="Minimieren" className="flex size-4 items-center justify-center rounded-full border border-[#bdb7ae] bg-[#f0eeea]"><span className="h-px w-1.5 bg-[#666]" /></button>
            <button aria-label="Maximieren" className="flex size-4 items-center justify-center rounded-full border border-[#bdb7ae] bg-[#f0eeea]"><span className="h-1.5 w-[7px] border border-[#666]" /></button>
          </span>
          <h1 className="pl-3">Teamraum_Scrum.xlsx - LibreOffice Calc</h1>
        </div>
        <nav className="flex h-[27px] items-end gap-[18px] pb-0.5 pl-2">
          {menus.map(([a, u, z]) => <a key={z} href={`#${z}`}>{a}<span className="underline underline-offset-2">{u}</span>{z}</a>)}
        </nav>
      </div>

      {/* standard toolbar */}
      <div role="toolbar" aria-label="Standard" className="flex h-[39px] shrink-0 items-center border-b border-[#dcd9d5]">
        <Grip />
        <TB i="newdoc" l="Neu" w="w-[34px]" /><DD l="Neu Optionen" />
        <TB i="open" l="Öffnen" w="w-[34px]" /><DD l="Zuletzt geöffnet" />
        <TB i="save" l="Speichern" w="w-[35px]" /><TB i="mail" l="E-Mail" /><Sep />
        <TB i="edit" l="Bearbeiten" on w="w-[31px]" /><Sep w="w-[9px]" />
        <TB i="pdf" l="Als PDF exportieren" /><TB i="print" l="Drucken" /><TB i="preview" l="Seitenansicht" /><Sep w="w-[9px]" />
        <TB i="spell" l="Rechtschreibung" /><TB i="autospell" l="Automatische Rechtschreibprüfung" on /><Sep w="w-[7px]" />
        <TB i="cut" l="Ausschneiden" /><TB i="copy" l="Kopieren" /><TB i="paste" l="Einfügen" /><DD l="Einfügen Optionen" />
        <TB i="brush" l="Format übertragen" w="w-9" /><Sep w="w-1" />
        <TB i="undo" l="Rückgängig" /><DD l="Rückgängig Liste" />
        <TB i="redo" l="Wiederherstellen" /><DD dim l="Wiederherstellen Liste" /><Sep w="w-3" />
        <TB i="link" l="Hyperlink" /><TB i="sortd" l="Absteigend sortieren" w="w-[34px]" /><TB i="sortu" l="Aufsteigend sortieren" w="w-8" /><Sep />
        <TB i="chart" l="Diagramm" /><TB i="shapes" l="Zeichenfunktionen" /><Sep />
        <TB i="compass" l="Navigator" /><TB i="gallery" l="Galerie" /><TB i="source" l="Datenquellen" /><Sep />
        <TB i="help" l="Hilfe" />
      </div>

      {/* formatting toolbar */}
      <div role="toolbar" aria-label="Format" className="flex h-[39px] shrink-0 items-center border-b border-[#dcd9d5]">
        <Grip />
        <TB i="wrench" l="Formatvorlagen" on w="w-[31px] ml-[3px]" /><Sep w="w-2.5" />
        <Combo v="Arial" l="Schriftart" w="w-[142px]" /><Sep w="w-2.5" /><Combo v="10" l="Schriftgröße" w="w-[66px]" /><Sep w="w-2" />
        <TB i="bold" l="Fett" w="w-[34px]" /><TB i="italic" l="Kursiv" w="w-[34px]" /><TB i="underline" l="Unterstrichen" /><Sep w="w-1.5" />
        <TB i="left" l="Linksbündig" /><TB i="center" l="Zentriert" /><TB i="right" l="Rechtsbündig" /><TB i="justify" l="Blocksatz" /><TB i="merge" l="Zellen verbinden" w="w-[35px]" /><Sep w="w-1.5" />
        <TB i="currency" l="Währung" /><TB i="percent" l="Prozent" w="w-8" /><TB i="adddec" l="Dezimalstelle hinzufügen" /><TB i="deldec" l="Dezimalstelle löschen" /><Sep w="w-[9px]" />
        <TB i="inddec" l="Einzug vermindern" /><TB i="indinc" l="Einzug erhöhen" /><Sep w="w-[7px]" />
        <TB i="border" l="Umrandung" w="w-[34px]" /><DD l="Umrandung Auswahl" />
        <TB i="bg" l="Hintergrundfarbe" w="w-[34px]" s="size-6" /><DD l="Hintergrundfarbe Auswahl" />
        <TB i="color" l="Schriftfarbe" w="w-[34px]" s="size-6" /><DD l="Schriftfarbe Auswahl" /><Sep w="w-2.5" />
        <TB i="grid" l="Gitternetzlinien" on w="w-8 !h-[34px]" />
      </div>

      <main className="flex min-h-0 flex-1">
        <div className="flex min-w-0 flex-1 flex-col">
          {/* formula bar */}
          <div className="flex h-[35px] shrink-0 items-start pt-1.5 pl-px">
            <Combo v="J20" l="Namensfeld" w="w-[154px]" /><Sep w="w-3" />
            <TB i="wizard" l="Funktionsassistent" w="w-[31px] !h-5" /><TB i="sum" l="Summe" w="w-[31px] !h-5" /><TB i="eq" l="Funktion" w="w-9 !h-5" /><Sep w="w-[7px]" />
            <input aria-label="Eingabezeile" className="h-6 min-w-0 flex-1 rounded border border-[#aca49b] bg-white px-1 outline-none" />
            <button aria-label="Eingabezeile erweitern" className="mx-[5px] flex h-6 w-3 shrink-0 items-center justify-center rounded border border-[#98938d] bg-gradient-to-b from-[#e7e5e3] to-[#cbc8c4]"><Tri c="border-t-[#333]" /></button>
          </div>

          <div className="flex min-h-0 flex-1">
            <div className="relative min-w-0 flex-1 overflow-hidden border-t border-[#a9a9a9]">
              <Sheet />
              <Chart />
            </div>
            {/* vertical scroll bar */}
            <div className="flex w-[13px] shrink-0 flex-col items-center bg-[#e3ded8]">
              <span className="flex h-1.5 w-full items-center justify-center bg-[#f5f4f2]"><span className="h-px w-2 bg-black" /></span>
              <button aria-label="Nach oben" className="flex h-3 w-full items-center justify-center rounded-t-full border border-[#b9b1a8] bg-[#f7f5f3]"><span className="h-0 w-0 border-x-[3px] border-b-[3px] border-x-transparent border-b-[#aaa]" /></button>
              <span className="flex h-[328px] w-full flex-col items-center justify-center gap-0.5 rounded-full border border-[#a39b92] bg-gradient-to-r from-white to-[#dedad5]"><span className="h-px w-1 bg-[#999]" /><span className="h-px w-1 bg-[#999]" /><span className="h-px w-1 bg-[#999]" /></span>
              <span className="w-full flex-1 rounded-b-full border-x border-[#bfb8b0]" />
              <button aria-label="Nach unten" className="flex h-[13px] w-full items-center justify-center rounded-b-full border border-[#b9b1a8] bg-[#f7f5f3]"><Tri c="border-t-[#666]" /></button>
            </div>
          </div>

          {/* sheet tabs */}
          <div className="flex h-[13px] shrink-0 items-stretch border-t border-[#9f978e] text-[10px] leading-3">
            <span className="flex gap-0.5 pl-px">
              {navs.map((d) => <button key={d} aria-label="Tabellen blättern" className="w-[11px] rounded-sm border border-[#aaa49d] bg-[#eceae7]"><svg viewBox="0 0 10 10" className="size-full" fill="#333" stroke="#333"><path d={d} /></svg></button>)}
            </span>
            <Slant d="M0 0 6 12" />
            <button className="border-b border-[#8a8a8a] bg-white pr-0.5 pl-1 font-bold text-[#222]">01_Start</button>
            {["02_Board", "03_Whiteboard"].map((t) => (
              <React.Fragment key={t}>
                <Slant />
                <button className="border-b border-[#8a8a8a] bg-[#dedad5] pr-0.5 pl-px">{t}</button>
              </React.Fragment>
            ))}
            <Slant />
            <button aria-label="Tabelle einfügen" className="flex w-4 justify-center border-b border-[#8a8a8a] bg-[#dedad5]"><svg viewBox="0 0 12 12" className="size-3"><path d="M6 1v10M1 6h10" stroke="#3f8f0e" strokeWidth="4" /><path d="M6 2v8M2 6h8" stroke="#79d02c" strokeWidth="2" /></svg></button>
            <Slant />
            <span className="w-[60px] shrink" />
            <span className="w-1.5 border-x border-[#8a8a8a] bg-white" />
            <span className="flex min-w-0 flex-1 rounded-full bg-[#e3ded8]">
              <button aria-label="Nach links" className="w-3 rounded-l-full border border-[#b9b1a8] bg-[#f7f5f3]"><svg viewBox="0 0 10 10" className="size-full" fill="#bbb"><path d="M6 2 3 5l3 3z" /></svg></button>
              <span className="flex w-[30%] items-center justify-center gap-0.5 rounded-full border border-[#a39b92] bg-gradient-to-b from-white to-[#efedea]"><span className="h-1 w-px bg-[#999]" /><span className="h-1 w-px bg-[#999]" /><span className="h-1 w-px bg-[#999]" /></span>
              <span className="flex-1 rounded-r-full border-b border-[#b9b1a8]" />
              <button aria-label="Nach rechts" className="w-3.5 rounded-r-full border border-[#b9b1a8] bg-[#f7f5f3]"><svg viewBox="0 0 10 10" className="size-full" fill="#444"><path d="m4 2 3 3-3 3z" /></svg></button>
            </span>
            <span className="mx-0.5 w-0.5 border-l border-black" />
            <span className="w-3" />
          </div>
        </div>

        <div className="flex w-1.5 shrink-0 items-center justify-center border-x border-t border-[#b3b0ac]"><span className="h-8 border-l border-dotted border-[#999]" /></div>

        {/* function list */}
        <aside className="flex w-[265px] shrink-0 flex-col border-t border-b border-[#b3b0ac] px-2 pt-[11px] pb-1">
          <div className="flex h-[30px] items-start gap-3">
            <button aria-label="Funktion einfügen" className="flex h-[26px] w-[29px] shrink-0 items-center justify-center rounded border border-[#96918b] bg-gradient-to-b from-[#e7e5e3] to-[#cbc8c4]"><Svg s="size-[18px]">{icons.fx}</Svg></button>
            <Select v="Zuletzt verwendet" l="Kategorie" cls="flex-1 mr-0.5" />
          </div>
          <ul className="h-[527px] border border-[#c5bcb3] bg-white p-px text-[15px] leading-[18px] text-[#333]">
            {fns.map((f, i) => <li key={f} className={i === 0 ? "bg-[#f07746] px-px text-white" : "px-px"}>{f}</li>)}
          </ul>
          <div className="mt-2 min-h-0 flex-1 rounded border border-[#d0c8bf] px-px pt-px leading-[17px] text-black">
            <p>SUMME:</p><p className="pt-[17px]">Zahl 1; Zahl 2; ...</p><p className="pt-[17px]">Summiert die Argumente.</p>
          </div>
        </aside>
      </main>

      {/* find bar */}
      <form className="flex h-[39px] shrink-0 items-center border-b border-[#b9b3a4]" onSubmit={(e) => e.preventDefault()}>
        <Grip />
        <TB i="closeX" l="Suchleiste schließen" w="w-9" s="size-5" />
        <Combo l="Suchen" ph="Suchen" w="w-[248px]" />
        <TB i="down" l="Abwärts suchen" /><TB i="up" l="Aufwärts suchen" />
        <button className="px-1 text-xs">Alle suchen</button>
        <label className="flex items-center gap-2 pl-2 text-[15px]"><input type="checkbox" className="size-[15px] appearance-none rounded-sm border border-[#a8a098] bg-white" />Groß-/Kleinschreibung</label>
        <Sep w="w-3.5" /><TB i="findrep" l="Suchen und Ersetzen" w="w-6" /><Sep w="w-5" />
      </form>

      {/* status bar */}
      <footer className="flex h-[23px] shrink-0 items-stretch border-b border-[#b9b3a4] pt-[3px] pb-px text-xs leading-[18px]">
        <span className="w-[261px] border-r border-[#c9c3bb] pl-2.5">Tabelle 1 / 3</span>
        <span className="w-[365px] border-r border-[#c9c3bb]" />
        <span className="w-[306px] border-r border-[#c9c3bb] pl-2">PageStyle_01_Start</span>
        <span className="w-[68px] border-r border-[#c9c3bb]" />
        <span className="flex w-[29px] items-center justify-center border-r border-[#c9c3bb]"><svg viewBox="0 0 14 12" className="h-3 w-3.5" stroke="#777"><path d="M0 4h8v5H0z" fill="#888" stroke="none" /><path d="M9 1h4M11 1v10M9 11h4" /></svg></span>
        <span className="flex w-[29px] items-center justify-center border-r border-[#c9c3bb]"><svg viewBox="0 0 14 14" className="size-3.5" fill="none" stroke="#888"><path d="M9 2H2v10h7" /><path d="M10 4v6M7.500 5.500l5 3M12.500 5.500l-5 3" stroke="#c0282c" strokeWidth="1.500" /></svg></span>
        <span className="w-[29px] border-r border-[#c9c3bb]" />
        <span className="flex-1 border-r border-[#c9c3bb] text-center">Summe=0</span>
        <span className="flex w-[143px] items-center gap-1.5 border-r border-[#c9c3bb] px-2.5">
          <span className="h-0.5 w-2 shrink-0 bg-[#888]" />
          <span className="relative flex flex-1 items-center">
            <input type="range" aria-label="Zoom" className="h-0.5 w-full appearance-none bg-[#aaa] [&::-webkit-slider-thumb]:size-[9px] [&::-webkit-slider-thumb]:appearance-none [&::-webkit-slider-thumb]:rounded-full [&::-webkit-slider-thumb]:border [&::-webkit-slider-thumb]:border-[#888] [&::-webkit-slider-thumb]:bg-white" defaultValue={60} />
            <span className="absolute left-1/2 h-2.5 w-px bg-[#999]" />
          </span>
          <svg viewBox="0 0 8 8" className="size-2 shrink-0"><path d="M4 0v8M0 4h8" stroke="#777" strokeWidth="1.500" /></svg>
        </span>
        <span className="w-[50px] pl-2 whitespace-nowrap">160 %</span>
      </footer>

      {/* task bar */}
      <nav aria-label="Fensterliste" className="flex h-[26px] shrink-0 items-center gap-0.5 pt-0.5 pl-px">
        <button aria-label="Desktop anzeigen" className="flex h-[22px] w-[22px] shrink-0 items-center justify-center rounded border border-[#a09a94] bg-[#e9e7e4]"><span className="h-[11px] w-3.5 border border-[#444] bg-gradient-to-br from-[#2d1420] to-[#c0507a]" /></button>
        <span className="w-[7px]"><Grip /></span>
        {tasks.map(([i, t, s], k) => (
          <button key={k} className={`flex h-[23px] min-w-0 flex-1 items-center gap-2 overflow-hidden rounded border px-1.5 whitespace-nowrap ${s === "hot" ? "border-[#a4796a] bg-[#e5b09d] font-bold" : s === "on" ? "border-[#8d8883] bg-[#cbc8c4]" : "border-[#a19c96] bg-gradient-to-b from-[#e3e1df] to-[#cfccc9]"}`}>
            <Svg s="size-4">{icons[i]}</Svg><span>{t}</span>
          </button>
        ))}
        <span className="ml-0.5 flex h-[22px] w-[132px] shrink-0 divide-x divide-[#ece8e4] rounded-sm bg-[#b5aaa0]">
          <button aria-label="Arbeitsfläche 1" className="flex flex-1 items-center justify-center border border-[#ece8e4] bg-[#ffb392]"><Svg s="size-4">{icons.calc}</Svg></button>
          <button aria-label="Arbeitsfläche 2" className="flex-1" /><button aria-label="Arbeitsfläche 3" className="flex-1" /><button aria-label="Arbeitsfläche 4" className="flex-1" />
        </span>
        <button aria-label="Papierkorb" className="flex w-6 shrink-0 justify-center"><Svg s="size-[22px]">{icons.trash}</Svg></button>
      </nav>

      <StylesDialog />
    </div>
  );
}
